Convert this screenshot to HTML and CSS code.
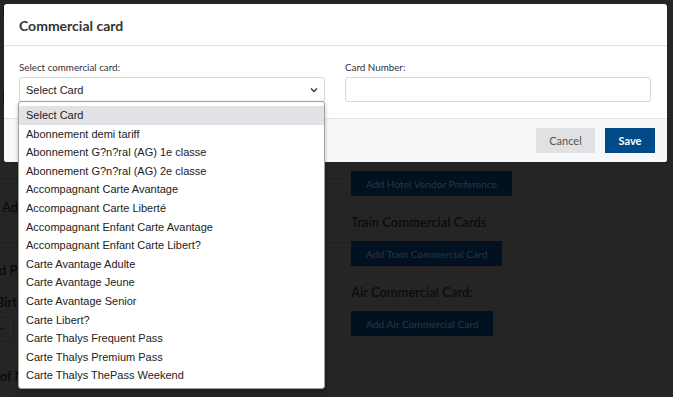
FILE: index.html
```html
<!DOCTYPE html>
<html>
<head>
<meta charset="utf-8">
<link rel="stylesheet" href="styles.css">
</head>
<body>
<div class="page">
  <div class="left-col">
    <div class="lc-row lc-top">Profile</div>
    <div class="lc-row lc-first">Hotel</div>
    <div class="lc-row lc-add">Add</div>
    <div class="lc-label lc-pa">Preferred Pa</div>
    <div class="lc-label lc-birth">Date of Birth</div>
    <div class="lc-select"><span class="lc-chev">&#8964;</span></div>
    <div class="lc-label lc-na">Country of Na</div>
  </div>
  <div class="right-col">
    <button class="pg-btn btn-hotel">Add Hotel Vendor Preference</button>
    <h3 class="pg-h">Train Commercial Cards</h3>
    <button class="pg-btn">Add Train Commercial Card</button>
    <h3 class="pg-h">Air Commercial Card:</h3>
    <button class="pg-btn">Add Air Commercial Card</button>
  </div>
</div>
<div class="modal">
  <div class="modal-header">
    <h2 class="modal-title">Commercial card</h2>
  </div>
  <div class="modal-body">
    <div class="field">
      <label class="field-label">Select commercial card:</label>
      <div class="select-box">
        <span class="select-value">Select Card</span>
        <svg class="chev" width="8" height="6" viewBox="0 0 8 6"><path d="M1 1.5 L4 4.5 L7 1.5" fill="none" stroke="#333" stroke-width="1.3"/></svg>
      </div>
      <ul class="dropdown">
        <li class="opt active">Select Card</li>
        <li class="opt">Abonnement demi tariff</li>
        <li class="opt">Abonnement G?n?ral (AG) 1e classe</li>
        <li class="opt">Abonnement G?n?ral (AG) 2e classe</li>
        <li class="opt">Accompagnant Carte Avantage</li>
        <li class="opt">Accompagnant Carte Liberté</li>
        <li class="opt">Accompagnant Enfant Carte Avantage</li>
        <li class="opt">Accompagnant Enfant Carte Libert?</li>
        <li class="opt">Carte Avantage Adulte</li>
        <li class="opt">Carte Avantage Jeune</li>
        <li class="opt">Carte Avantage Senior</li>
        <li class="opt">Carte Libert?</li>
        <li class="opt">Carte Thalys Frequent Pass</li>
        <li class="opt">Carte Thalys Premium Pass</li>
        <li class="opt">Carte Thalys ThePass Weekend</li>
      </ul>
    </div>
    <div class="field">
      <label class="field-label">Card Number:</label>
      <div class="text-input"></div>
    </div>
  </div>
  <div class="modal-footer">
    <button class="btn btn-cancel">Cancel</button>
    <button class="btn btn-save">Save</button>
  </div>
</div>
</body>
</html>
```

FILE: styles.css
```css
* { box-sizing: border-box; }
html, body { margin: 0; padding: 0; }
body {
  width: 673px;
  height: 397px;
  overflow: hidden;
  background: #252525;
  font-family: Lato, "Open Sans", sans-serif;
  position: relative;
}

/* background page, shown dimmed behind the modal */
.page {
  display: flex;
  height: 397px;
}
.left-col {
  width: 389px;
  flex: none;
  margin-left: -38px;
  color: #0a0a0a;
  font-size: 13px;
}
.lc-row {
  border-bottom: 1px solid #1f1f1f;
  padding-left: 40px;
}
.lc-top { height: 48px; padding-top: 4px; }
.lc-first { height: 131px; padding-top: 42px; }
.lc-add { height: 64px; padding-top: 20px; }
.lc-label { padding-left: 2px; font-weight: 600; }
.lc-pa { margin-top: 19px; margin-left: -12px; }
.lc-birth { margin-top: 16px; margin-left: -14px; }
.lc-select {
  margin-top: 7px;
  width: 52px;
  height: 25px;
  border: 1px solid #1e1e1e;
  border-radius: 3px;
  position: relative;
}
.lc-chev { position: absolute; right: 6px; top: 0; font-size: 12px; color: #111; }
.lc-na { margin-top: 26px; margin-left: -14px; }

.right-col {
  padding-top: 171px;
  display: flex;
  flex-direction: column;
  align-items: flex-start;
}
.pg-btn {
  font-family: Lato, sans-serif;
  font-size: 10.2px;
  color: #2a3642;
  background: #02111f;
  border: none;
  height: 25px;
  padding: 0 15px;
}
.pg-h {
  font-size: 13px;
  font-weight: 600;
  color: #0c0c0c;
  margin: 16px 0 9px;
  line-height: 20px;
}

/* modal */
.modal {
  position: absolute;
  left: 4px;
  top: 4px;
  width: 663px;
  background: #fff;
  border-radius: 3px;
  color: #333;
}
.modal-header {
  height: 42px;
  border-bottom: 1px solid #e2e2e2;
  display: flex;
  align-items: center;
  padding: 0 15px;
}
.modal-title {
  margin: 0;
  font-size: 14px;
  font-weight: 700;
  color: #333;
  padding-top: 1px;
}
.modal-body {
  display: grid;
  grid-template-columns: 306px 306px;
  column-gap: 20px;
  padding: 14px 16px 16px 15px;
  height: 72px;
}
.field { position: relative; }
.field-label {
  display: block;
  font-size: 9.8px;
  color: #333;
  line-height: 14px;
  margin-bottom: 3px;
}
.select-box, .text-input {
  height: 25px;
  border: 1px solid #d8d8d8;
  border-radius: 3px;
  background: #fff;
}
.select-box {
  display: flex;
  align-items: center;
  justify-content: space-between;
  padding: 0 6px 0 6px;
  font-family: "Liberation Sans", Arial, sans-serif;
  font-size: 11px;
  color: #222;
}
.chev { margin-top: 1px; }

.dropdown {
  position: absolute;
  left: -1px;
  top: 41px;
  width: 307px;
  margin: 0;
  padding: 4px 0 3px;
  list-style: none;
  background: #fff;
  border: 1px solid #a0a0a0;
  border-radius: 3px;
  box-shadow: 0 2px 4px rgba(0,0,0,0.25);
  z-index: 5;
  font-family: "Liberation Sans", Arial, sans-serif;
  font-size: 11px;
  color: #222;
}
.opt {
  height: 18.6px;
  line-height: 18.6px;
  padding-left: 7px;
  white-space: nowrap;
}
.opt.active { background: #e1e1e6; }

.modal-footer {
  background: #f7f8fa;
  border-top: 1px solid #e2e2e2;
  height: 44px;
  display: flex;
  justify-content: flex-end;
  align-items: center;
  gap: 10px;
  padding: 0 12px 0 0;
  border-radius: 0 0 3px 3px;
}
.btn {
  font-family: Lato, sans-serif;
  font-size: 11px;
  height: 25px;
  border: none;
  padding: 0;
}
.btn-cancel {
  width: 59px;
  background: #e0e1e3;
  color: #555;
}
.btn-save {
  width: 50px;
  background: #004a87;
  color: #fff;
  font-weight: 700;
}
```
